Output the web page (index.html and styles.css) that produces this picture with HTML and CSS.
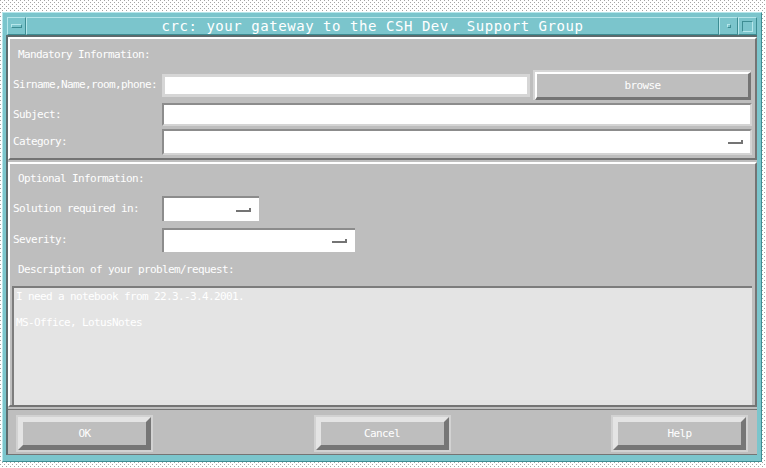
FILE: index.html
```html
<!DOCTYPE html>
<html>
<head>
<meta charset="utf-8">
<link rel="stylesheet" href="styles.css">
</head>
<body>
<div class="window">
  <div class="titlebar">
    <div class="tb-btn menu"><span class="menu-bar"></span></div>
    <div class="tb-title">crc: your gateway to the CSH Dev. Support Group</div>
    <div class="tb-btn min"><span class="min-dot"></span></div>
    <div class="tb-btn max"><span class="max-box"></span></div>
  </div>
  <div class="client">
    <section class="panel mandatory">
      <div class="heading">Mandatory Information:</div>
      <div class="row row-name">
        <span class="label">Sirname,Name,room,phone:</span>
        <div class="field name-field"></div>
        <div class="browse"><div class="browse-face">browse</div></div>
      </div>
      <div class="row row-subject">
        <span class="label">Subject:</span>
        <div class="field wide-field"></div>
      </div>
      <div class="row row-category">
        <span class="label">Category:</span>
        <div class="field wide-field combo"><span class="combo-mark"></span></div>
      </div>
    </section>
    <section class="panel optional">
      <div class="heading">Optional Information:</div>
      <div class="row row-solution">
        <span class="label">Solution required in:</span>
        <div class="field combo solution-combo"><span class="combo-mark"></span></div>
      </div>
      <div class="row row-severity">
        <span class="label">Severity:</span>
        <div class="field combo severity-combo"><span class="combo-mark"></span></div>
      </div>
      <div class="heading desc-heading">Description of your problem/request:</div>
      <div class="textarea">I need a notebook from 22.3.-3.4.2001.<br><br>MS-Office, LotusNotes</div>
    </section>
    <div class="buttonbar">
      <div class="btn"><div class="btn-face">OK</div></div>
      <div class="btn"><div class="btn-face">Cancel</div></div>
      <div class="btn"><div class="btn-face">Help</div></div>
    </div>
  </div>
</div>
</body>
</html>
```
FILE: styles.css
```css
html, body {
  margin: 0;
  padding: 0;
}
body {
  width: 766px;
  height: 468px;
  overflow: hidden;
  background-color: #ffffff;
  background-image:
    conic-gradient(from 270deg at 1px 1px, #a4a4a4 90deg, transparent 0),
    conic-gradient(from 270deg at 1px 1px, #a4a4a4 90deg, transparent 0);
  background-size: 4px 4px, 4px 4px;
  background-position: 0 0, 2px 2px;
  font-family: "DejaVu Sans Mono", "Liberation Mono", monospace;
  font-size: 11px;
  letter-spacing: -0.62px;
  color: #ffffff;
}
.window {
  margin: 12px 0 0 2px;
  width: 760px;
  height: 450px;
  box-sizing: border-box;
  background: #7bc5cc;
  border: 1px solid;
  border-color: #b6e7eb #3d8d93 #3d8d93 #b6e7eb;
  padding: 4px 4px 6px 3px;
  display: flex;
  flex-direction: column;
}
.titlebar {
  height: 18px;
  display: flex;
  margin-left: 1px;
}
.tb-btn {
  width: 19px;
  box-sizing: border-box;
  border: 1px solid;
  border-color: #b6e7eb #3d8d93 #3d8d93 #b6e7eb;
  display: flex;
  align-items: center;
  justify-content: center;
}
.menu-bar {
  width: 11px;
  height: 4px;
  box-sizing: border-box;
  border: 1px solid;
  border-color: #b6e7eb #3d8d93 #3d8d93 #b6e7eb;
}
.min-dot {
  width: 4px;
  height: 4px;
  box-sizing: border-box;
  border: 1px solid;
  border-color: #b6e7eb #3d8d93 #3d8d93 #b6e7eb;
}
.max-box {
  width: 11px;
  height: 11px;
  box-sizing: border-box;
  border: 1px solid;
  border-color: #3d8d93 #b6e7eb #b6e7eb #3d8d93;
}
.tb-title {
  flex: 1;
  box-sizing: border-box;
  border: 1px solid;
  border-color: #b6e7eb #3d8d93 #3d8d93 #b6e7eb;
  text-align: center;
  font-size: 14px;
  letter-spacing: 0.55px;
  line-height: 16px;
  color: #ffffff;
}
.client {
  flex: 1;
  background: #bebebe;
  border-top: 2px solid #5b6b6d;
  border-left: 2px solid #5b6b6d;
  border-bottom: 1px solid #747474;
  display: flex;
  flex-direction: column;
  gap: 2px;
}
.panel {
  border: 2px solid;
  border-color: #ffffff #747474 #747474 #ffffff;
  display: flex;
  flex-direction: column;
}
.mandatory {
  height: 123px;
  box-sizing: border-box;
  padding-bottom: 3px;
}
.optional {
  height: 245px;
  box-sizing: border-box;
}
.heading {
  line-height: 12px;
  height: 12px;
  padding-left: 8px;
  white-space: nowrap;
}
.mandatory .heading {
  margin-top: 10px;
  margin-bottom: 9px;
}
.optional .heading {
  margin-top: 9px;
}
.optional .desc-heading {
  margin-top: 12px;
}
.row {
  display: flex;
  align-items: center;
  padding-left: 3px;
}
.label {
  width: 149px;
  flex: none;
  white-space: nowrap;
  line-height: 12px;
}
.row-name {
  height: 30px;
}
.row-subject {
  height: 23px;
  margin-top: 3px;
}
.row-category {
  height: 26px;
  margin-top: 3px;
}
.field {
  background: #ffffff;
  box-sizing: border-box;
  border: 2px solid;
  border-color: #8c8c8c #d4d4d4 #d4d4d4 #8c8c8c;
  height: 100%;
}
.name-field {
  width: 368px;
  height: 23px;
  border: 3px solid #d6d6d6;
}
.wide-field {
  width: 590px;
}
.row-category .wide-field {
  height: 26px;
}
.combo {
  display: flex;
  align-items: center;
  justify-content: flex-end;
  padding-right: 7px;
}
.combo-mark {
  width: 15px;
  height: 4px;
  box-sizing: border-box;
  border-bottom: 2px solid #747474;
  border-right: 2px solid #747474;
}
.row-solution {
  height: 25px;
  margin-top: 11px;
}
.solution-combo {
  width: 97px;
  border-right: none;
  border-bottom: none;
  padding-right: 8px;
}
.row-severity {
  height: 24px;
  margin-top: 7px;
}
.severity-combo {
  width: 193px;
  border-right: none;
  border-bottom: none;
  padding-right: 8px;
}
.browse {
  width: 218px;
  height: 30px;
  margin-left: 3px;
  box-sizing: border-box;
  border-top: 2px solid #d6d6d6;
  border-left: 2px solid #d6d6d6;
}
.browse-face {
  height: 100%;
  box-sizing: border-box;
  border-style: solid;
  border-width: 2px 3px 3px 2px;
  border-color: #ffffff #747474 #747474 #ffffff;
  display: flex;
  align-items: center;
  justify-content: center;
  line-height: 12px;
}
.textarea {
  margin: 10px 3px 0 2px;
  height: 119px;
  box-sizing: border-box;
  background: #e4e4e4;
  border-top: 2px solid #7c7c7c;
  border-left: 2px solid #7c7c7c;
  padding: 2px 2px 0 2px;
  line-height: 13px;
  color: #ffffff;
  white-space: nowrap;
}
.buttonbar {
  flex: 1;
  display: flex;
  justify-content: space-between;
  align-items: flex-start;
  border-top: 1px solid #747474;
  padding: 5px 9px 0 8px;
}
.btn {
  width: 137px;
  height: 37px;
  box-sizing: border-box;
  border: 2px solid #d2d2d2;
}
.btn-face {
  height: 100%;
  box-sizing: border-box;
  border-style: solid;
  border-width: 5px;
  border-color: #e4e4e4 #767676 #767676 #e4e4e4;
  background: #bebebe;
  display: flex;
  align-items: center;
  justify-content: center;
  line-height: 12px;
}
```
